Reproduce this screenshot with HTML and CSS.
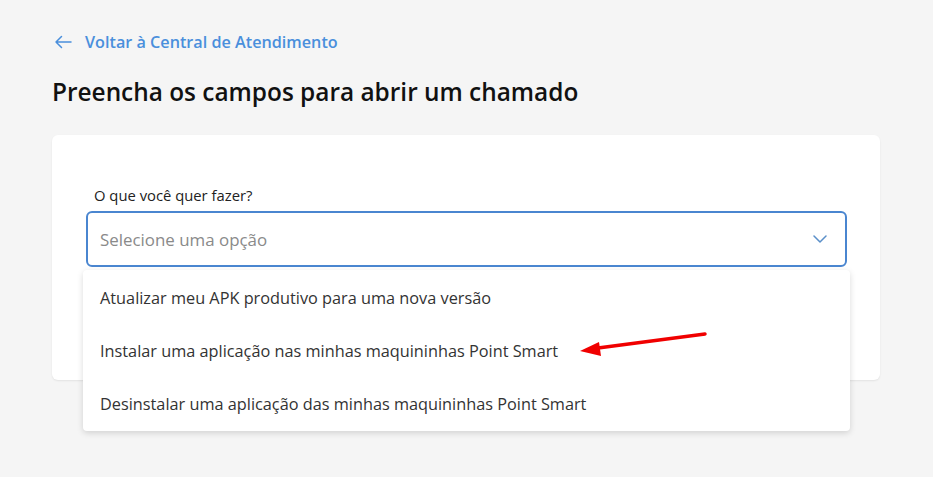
FILE: index.html
```html
<!DOCTYPE html>
<html lang="pt-BR">
<head>
<meta charset="utf-8">
<link rel="stylesheet" href="styles.css">
</head>
<body>
<div class="page">
  <a class="back" href="#">
    <svg class="back-icon" width="18" height="14" viewBox="0 0 18 14"><path d="M17 7H2M7.5 1.5L2 7l5.5 5.5" fill="none" stroke="#4a8fdc" stroke-width="1.5" stroke-linecap="round" stroke-linejoin="round"/></svg>
    <span>Voltar à Central de Atendimento</span>
  </a>
  <h1 class="title">Preencha os campos para abrir um chamado</h1>
  <div class="card">
    <label class="label">O que você quer fazer?</label>
    <div class="select-wrap">
      <div class="select">
        <span class="placeholder">Selecione uma opção</span>
        <svg class="chev" width="14" height="8" viewBox="0 0 14 8"><path d="M1 1l6 6 6-6" fill="none" stroke="#5a8fc9" stroke-width="1.5" stroke-linecap="round" stroke-linejoin="round"/></svg>
      </div>
      <ul class="menu">
        <li class="option">Atualizar meu APK produtivo para uma nova versão</li>
        <li class="option">Instalar uma aplicação nas minhas maquininhas Point Smart</li>
        <li class="option">Desinstalar uma aplicação das minhas maquininhas Point Smart</li>
      </ul>
      <svg class="arrow" width="140" height="30" viewBox="0 0 140 30"><path d="M127 5L20 19" stroke="#f00000" stroke-width="3.5" stroke-linecap="round"/><path d="M2 22L21 13l2 14z" fill="#f00000"/></svg>
    </div>
  </div>
</div>
</body>
</html>
```
FILE: styles.css
```css
* { box-sizing: border-box; }
html, body { margin: 0; padding: 0; }
body {
  background: #f5f5f5;
  font-family: "Open Sans", "Liberation Sans", sans-serif;
  color: #1a1a1a;
  width: 933px;
  height: 477px;
  overflow: hidden;
}
.page { padding: 30px 53px 0 52px; }
.back {
  display: flex;
  align-items: center;
  gap: 13px;
  text-decoration: none;
  color: #4a8fdc;
  font-size: 16.2px;
  font-weight: 600;
  height: 24px;
  padding-left: 2px;
}
.title {
  margin: 23px 0 0;
  font-size: 24.4px;
  font-weight: 600;
  line-height: 30px;
  color: #111;
}
.card {
  margin-top: 28px;
  background: #fff;
  border-radius: 6px;
  height: 245px;
  padding: 50px 33px 0 34px;
  box-shadow: 0 1px 2px rgba(0,0,0,0.08);
}
.label {
  display: block;
  font-size: 14.8px;
  line-height: 20px;
  color: #222;
  padding-left: 8px;
  margin-bottom: 6px;
}
.select-wrap { position: relative; }
.select {
  height: 56px;
  border: 2px solid #4a86d0;
  border-radius: 6px;
  display: flex;
  align-items: center;
  justify-content: space-between;
  padding: 0 18px 0 12px;
  background: #fff;
}
.placeholder { font-size: 16.9px; color: #8a8a8a; }
.menu {
  position: absolute;
  top: 59px;
  left: -3px;
  right: -3px;
  margin: 0;
  padding: 2px 0 0;
  list-style: none;
  background: #fff;
  border-radius: 4px;
  box-shadow: 0 2px 6px rgba(0,0,0,0.15);
}
.option {
  height: 53px;
  line-height: 53px;
  padding-left: 17px;
  font-size: 16.3px;
  color: #333;
}
.arrow {
  position: absolute;
  left: 492px;
  top: 118px;
}
```
